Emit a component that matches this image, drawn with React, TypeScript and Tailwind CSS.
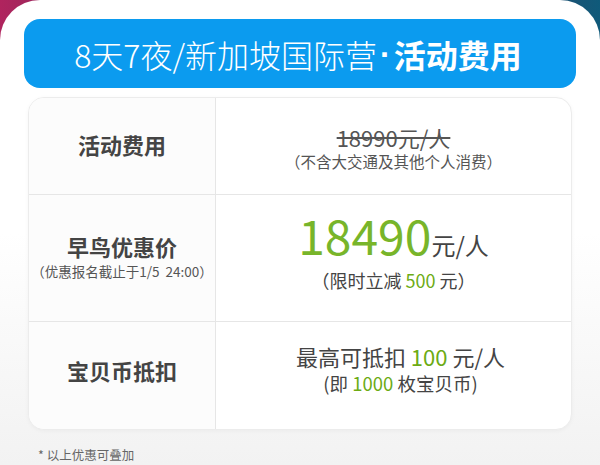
import React from "react";

const font = { fontFamily: '"Noto Sans CJK SC", "Noto Sans", sans-serif' };
const latin = { fontFamily: '"Liberation Sans", "Noto Sans", sans-serif' };

export default function App() {
  return (
    <div
      className="w-[600px] h-[465px] overflow-hidden bg-gradient-to-r from-[#b0245e] via-[#2a1d4a] to-[#0f5a7a]"
      style={font}
    >
      <div className="h-full rounded-t-[40px] bg-gradient-to-b from-white via-white to-[#f2f2f2] pt-[19px] px-[24px]">
        <div className="h-[69px] rounded-[16px] bg-[#0b9bef] flex items-center justify-center text-white text-[32px] leading-none pr-[4px]">
          <span className="font-light">8天7夜/新加坡国际营</span>
          <span className="font-bold px-[3px]" style={latin}>·</span>
          <span className="font-bold">活动费用</span>
        </div>

        <div className="mt-[9px] mx-[4px] rounded-[16px] border border-[#ececec] bg-white shadow-[0_1px_4px_rgba(0,0,0,0.04)] grid grid-cols-[187px_1fr] overflow-hidden">
          {/* Row 1 */}
          <div className="h-[97px] flex items-center justify-center border-r border-b border-[#e6e6e6] bg-[#fcfcfc] pb-[4px]">
            <span className="text-[22px] font-bold text-[#444]">活动费用</span>
          </div>
          <div className="h-[97px] flex flex-col items-center justify-center border-b border-[#e6e6e6] pt-[2px]">
            <span className="text-[22px] leading-[28px] text-[#555] line-through decoration-[#555]">18990元/人</span>
            <span className="text-[15.5px] leading-[20px] text-[#555]">（不含大交通及其他个人消费）</span>
          </div>

          {/* Row 2 */}
          <div className="h-[127px] flex flex-col items-center justify-center border-r border-b border-[#e6e6e6] bg-[#fcfcfc] pb-[4px]">
            <span className="text-[22px] leading-[30px] font-bold text-[#444]">早鸟优惠价</span>
            <span className="whitespace-nowrap text-[13.5px] leading-[20px] text-[#555]">（优惠报名截止于1/5&nbsp;&nbsp;24:00）</span>
          </div>
          <div className="h-[127px] flex flex-col items-center justify-center border-b border-[#e6e6e6] pb-[13px]">
            <div className="flex items-baseline leading-[46px]">
              <span className="text-[48px] text-[#78b52a]">18490</span>
              <span className="text-[24px] text-[#444]">元/人</span>
            </div>
            <span className="text-[18px] leading-[24px] text-[#444]">
              （限时立减 <span className="text-[#6cab14]">500</span> 元）
            </span>
          </div>

          {/* Row 3 */}
          <div className="h-[107px] flex items-center justify-center border-r border-[#e6e6e6] bg-[#fcfcfc] pb-[10px]">
            <span className="text-[22px] font-bold text-[#444]">宝贝币抵扣</span>
          </div>
          <div className="h-[107px] flex flex-col items-center justify-center pb-[16px] pl-[14px]">
            <span className="text-[22px] leading-[30px] text-[#444]">
              最高可抵扣 <span className="text-[#6cab14]">100</span> 元/人
            </span>
            <span className="text-[18.5px] leading-[24px] text-[#444]">
              (即 <span className="text-[#6cab14]">1000</span> 枚宝贝币)
            </span>
          </div>
        </div>

        <div className="mt-[16px] pl-[14px] text-[12.5px] leading-[18px] text-[#666]">* 以上优惠可叠加</div>
      </div>
    </div>
  );
}
